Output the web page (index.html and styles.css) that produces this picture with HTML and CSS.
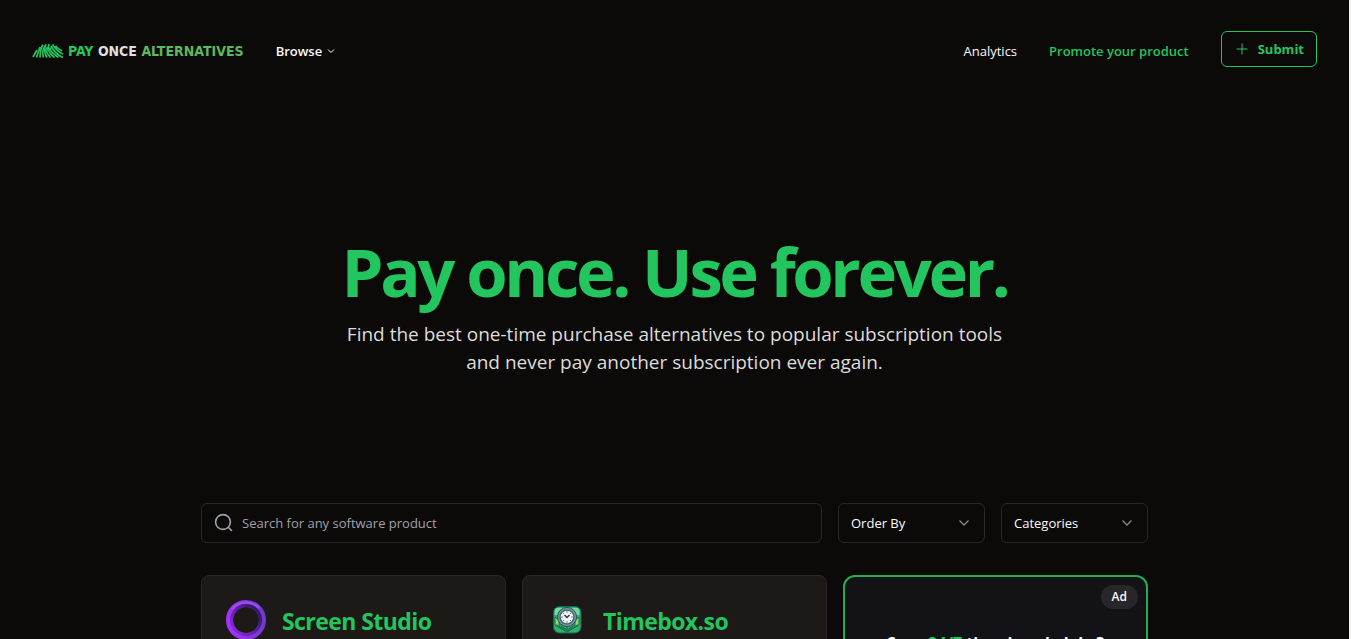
FILE: index.html
```html
<!DOCTYPE html>
<html lang="en">
<head>
<meta charset="utf-8">
<title>Pay Once Alternatives</title>
<link rel="stylesheet" href="styles.css">
</head>
<body>
<div class="page">
  <header class="header">
    <a class="logo" href="#">
      <svg class="logo-mark" viewBox="0 0 32 16" fill="none" stroke="#22c55e" stroke-width="1.700">
        <path d="M1 14L5 7M4.500 14.500L8 4M8 14.500Q8 7 11 1.500M11.500 14.500Q9.500 8 13 3M15 14.500Q11 8 14 1M18.500 14.500Q12.500 8 15.500 4M22.500 14.500Q14 8 17 1M26.500 14.500Q18 9 18 4.500M31 14.500Q23 11 19 3M31 11Q25 8.500 20.500 1.500M30 8Q26 6 23.500 3"/>
      </svg>
      <span class="logo-text"><span class="pay">PAY</span> <span class="once">ONCE</span> <span class="alt">ALTERNATIVES</span></span>
    </a>
    <button class="browse" type="button">Browse
      <svg width="8" height="8" viewBox="0 0 8 8" fill="none" stroke="currentColor"><path d="M1 2.500l3 3 3-3"/></svg>
    </button>
    <nav class="nav">
      <a class="link" href="#">Analytics</a>
      <a class="link promote" href="#">Promote your product</a>
      <a class="submit" href="#"><svg width="12" height="12" viewBox="0 0 12 12" stroke="currentColor"><path d="M6 0.500v11M0.500 6h11"/></svg>Submit</a>
    </nav>
  </header>
  <main class="main">
    <section class="hero">
      <h1 class="title">Pay once. Use forever.</h1>
      <p class="subtitle">Find the best one-time purchase alternatives to popular subscription tools<br>and never pay another subscription ever again.</p>
    </section>
    <form class="filters">
      <label class="search">
        <svg width="20" height="20" viewBox="0 0 20 20" fill="none" stroke="#9ca3af" stroke-width="1.600" stroke-linecap="round"><circle cx="9" cy="9" r="7.400"/><path d="M14.500 14.500l3 3"/></svg>
        <input type="search" aria-label="Search products" placeholder="Search for any software product">
      </label>
      <div class="picker">
        <select aria-label="Order By"><option>Order By</option></select>
        <svg class="chevron" width="12" height="8" viewBox="0 0 12 8" fill="none" stroke="#8a8785" stroke-width="1.300"><path d="M1.500 1.500L6 6l4.500-4.500"/></svg>
      </div>
      <div class="picker">
        <select aria-label="Categories"><option>Categories</option></select>
        <svg class="chevron" width="12" height="8" viewBox="0 0 12 8" fill="none" stroke="#8a8785" stroke-width="1.300"><path d="M1.500 1.500L6 6l4.500-4.500"/></svg>
      </div>
    </form>
    <section class="cards">
      <article class="card">
        <svg class="card-icon" viewBox="0 0 40 40" fill="none">
          <defs>
            <linearGradient id="outer" x1="0" y1="0.600" x2="1" y2="0.400"><stop stop-color="#a530ff"/><stop offset="1" stop-color="#6d3bc9"/></linearGradient>
            <linearGradient id="inner" x1="0" y1="1" x2="1" y2="0.200"><stop stop-color="#8a2be2"/><stop offset="0.500" stop-color="#6420b0"/><stop offset="1" stop-color="#30136b"/></linearGradient>
          </defs>
          <circle cx="20" cy="20" r="16.500" stroke="url(#outer)" stroke-width="7"/>
          <circle cx="20" cy="20" r="14.500" stroke="url(#inner)" stroke-width="3"/>
          <path d="M6 9A18 18 0 0 1 33 8" stroke="#9b50ea" stroke-width="2"/>
        </svg>
        <h2 class="name">Screen Studio</h2>
      </article>
      <article class="card">
        <svg class="card-icon" viewBox="0 0 40 40" fill="none">
          <rect x="6.500" y="6.500" width="27.500" height="26.500" rx="6" fill="#2fae75" stroke="#12695a"/>
          <path d="M9 8h22q2 2 1 7H8q-1-5 1-7z" fill="#73db98"/>
          <path d="M8 17l4 3v5l8 5 8-5v-5l4-3v8l-12 7-12-7z" fill="#8ddd68" stroke="#17654a"/>
          <path d="M20 27v5M9 25l11 6 11-6" stroke="#207d43" stroke-width="1.500"/>
          <circle cx="20" cy="17" r="9.500" fill="#7f9ea4" stroke="#294d5b"/>
          <circle cx="20" cy="17" r="7" fill="#f1f5f5" stroke="#456872" stroke-width="1.500"/>
          <path d="M20 11v2M20 21v2M14 17h2M24 17h2M16 13l1 1M24 13l-1 1M16 21l1-1M24 21l-1-1" stroke="#71868d"/>
          <path d="M17.500 15l2.500 2.500 2.500-2.500" stroke="#253e49" stroke-width="1.500"/>
        </svg>
        <h2 class="name">Timebox.so</h2>
      </article>
      <article class="card ad">
        <span class="badge">Ad</span>
        <h2 class="ad-text">Save <span>24/7</span> time in solo labs?</h2>
      </article>
    </section>
  </main>
</div>
</body>
</html>
```
FILE: styles.css
```css
* { box-sizing: border-box; }
body {
  margin: 0;
  background: #0c0a09;
  color: #fafaf9;
  font-family: "Open Sans", "Noto Sans", sans-serif;
  font-size: 13px;
}
a { color: inherit; text-decoration: none; }
button, input, select { font: inherit; color: inherit; }
h1, h2, p { margin: 0; }
.page { height: 100vh; overflow: hidden; border-right: 2px solid #f1f1f1; }
.header { display: flex; align-items: center; padding: 31px 32px 0; height: 71px; }
.logo { display: flex; align-items: center; gap: 4px; }
.logo-mark { width: 32px; height: 16px; }
.logo-text { font: bold 14px "DejaVu Sans Condensed", sans-serif; white-space: nowrap; }
.pay { color: #22c55e; }
.once { color: #dedede; }
.alt { color: #5cb85c; }
.browse {
  display: flex;
  align-items: center;
  gap: 5px;
  margin-left: 32px;
  padding: 0;
  border: 0;
  background: none;
  font-weight: 600;
}
.nav { display: flex; align-items: center; gap: 32px; margin-left: auto; }
.promote { color: #22c55e; font-weight: 600; }
.submit {
  display: flex;
  align-items: center;
  gap: 10px;
  height: 36px;
  margin-bottom: 4px;
  padding: 0 12px 0 14px;
  border: 1px solid #22c55e;
  border-radius: 6px;
  color: #22c55e;
  font-weight: 700;
}
.main { max-width: 947px; margin: 0 auto; }
.hero { padding: 164px 0 127px; text-align: center; }
.title {
  color: #22c55e;
  font-size: 67px;
  font-weight: 700;
  line-height: 72px;
  letter-spacing: -0.05em;
}
.subtitle { margin-top: 13px; color: #dedcda; font-size: 19px; line-height: 28px; }
.filters { display: grid; grid-template-columns: 1fr 147px 147px; gap: 16px; }
.search, .picker select { height: 40px; border: 1px solid #27272a; border-radius: 6px; }
.search { display: flex; align-items: center; gap: 8px; padding: 0 12px; }
.search input { flex: 1; min-width: 0; padding: 0; border: 0; outline: 0; background: none; }
.search input::placeholder { color: #a1a1aa; opacity: 1; }
.picker { display: grid; align-items: center; }
.picker > * { grid-area: 1 / 1; }
.picker select { width: 100%; padding: 0 12px; appearance: none; background: #0c0a09; }
.chevron { justify-self: end; margin-right: 15px; pointer-events: none; }
.cards { display: grid; grid-template-columns: repeat(3, 1fr); gap: 16px; margin-top: 32px; }
.card {
  display: flex;
  align-items: flex-start;
  gap: 16px;
  height: 220px;
  padding: 24px;
  border: 1px solid #292729;
  border-radius: 8px;
  background: #1c1917;
}
.card-icon { width: 40px; height: 40px; }
.name { color: #22c55e; font-size: 23px; line-height: 32px; margin-top: 5px; letter-spacing: -0.025em; }
.ad {
  position: relative;
  justify-content: center;
  border: 2px solid #22ad55;
  border-radius: 12px;
  background: #121217;
}
.badge {
  position: absolute;
  top: 8px;
  right: 8px;
  padding: 2px 11px;
  border-radius: 12px;
  background: #27272a;
  font-size: 12px;
  font-weight: 600;
  line-height: 20px;
}
.ad-text { margin-top: 28px; font-size: 16px; line-height: 28px; }
.ad-text span { color: #22c55e; }
```
